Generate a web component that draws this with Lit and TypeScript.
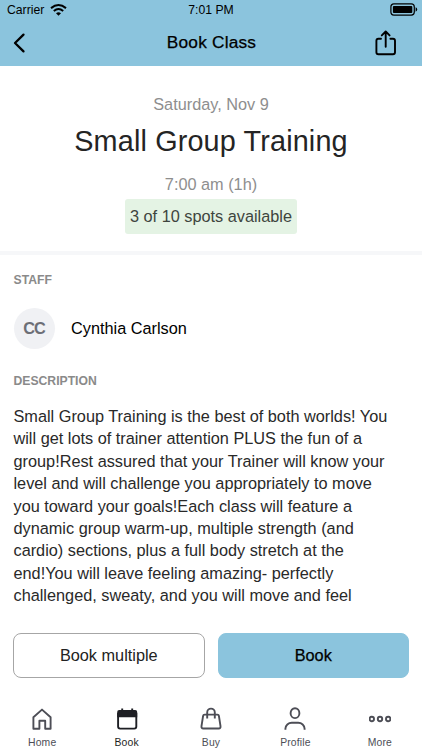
import { LitElement, html, css, svg } from "lit";
import { customElement } from "lit/decorators.js";
import { classMap } from "lit/directives/class-map.js";

const icons = {
  home: svg`<path d="M2.4 10.2 11 2.6l8.6 7.6V21.7h-5.4v-7.9H8.4v7.9H2.4Z"/>`,
  book: svg`<path d="M2.1 6v13.6q0 2 2 2h14.2q2 0 2-2V6"/><path class="solid" d="M1.2 10.2V5Q1.2 3 3.2 3h16q2 0 2 2v5.2Z"/><path d="M6.2 1.4v3M16.2 1.4v3"/>`,
  buy: svg`<path d="M4.6 7.6h12.8q1.3 0 1.5 1.3l1.6 10.2q.3 2.4-1.8 2.4H3.3q-2.1 0-1.8-2.4L3.1 8.9q.2-1.3 1.5-1.3Z"/><path d="M7.2 11.6V5.4a3.8 3.8 0 0 1 7.6 0v6.2"/>`,
  profile: svg`<ellipse cx="11" cy="6.2" rx="4.4" ry="4.9"/><path d="M1.4 22.8v-1c0-3.6 3-6 6.4-6h6.4c3.4 0 6.4 2.4 6.4 6v1"/>`,
  more: svg`<circle cx="2.8" cy="12" r="2.2"/><circle cx="11" cy="12" r="2.2"/><circle cx="19.2" cy="12" r="2.2"/>`,
};

const tabs = [
  { label: "Home", icon: icons.home, active: false },
  { label: "Book", icon: icons.book, active: true },
  { label: "Buy", icon: icons.buy, active: false },
  { label: "Profile", icon: icons.profile, active: false },
  { label: "More", icon: icons.more, active: false },
];

@customElement("app-header")
class AppHeader extends LitElement {
  static styles = css`
    :host { display: flex; flex-direction: column; height: 66px; flex: none; background: #8bc4dd; color: #000; }
    .status { display: grid; grid-template-columns: 1fr auto 1fr; align-items: center; height: 19px; padding: 0 4px 0 7px; font-size: 12.2px; }
    .carrier { display: flex; align-items: center; gap: 6px; }
    .time { padding-right: 3px; }
    .battery { justify-self: end; }
    .nav { display: grid; grid-template-columns: 1fr auto 1fr; align-items: center; height: 47px; padding: 0 24px 0 12px; }
    .title { font-size: 17.3px; font-weight: 400; letter-spacing: .2px; -webkit-text-stroke: 0.25px #000; margin: 0; padding-left: 13px; }
    .share { justify-self: end; }
    svg { display: block; fill: none; stroke: #000; }
  `;
  render() {
    return html`
      <div class="status">
        <div class="carrier">Carrier
          <svg width="17" height="12" viewBox="0 0 17 12" stroke-width="2">
            <path d="M1 4.1Q8.5-2 16 4.1M3.8 6.9q4.7-3.9 9.4 0"/><path d="M6 9.2q2.5-2 5 0L8.5 11.7Z" fill="#000" stroke="none"/>
          </svg>
        </div>
        <div class="time">7:01 PM</div>
        <svg class="battery" width="28" height="13" viewBox="0 0 28 13">
          <rect x=".9" y=".9" width="23.4" height="11.2" rx="3" stroke-width="1.2"/>
          <rect x="2.9" y="2.9" width="19.4" height="7.2" rx="1" fill="#000" stroke="none"/>
          <path d="M25.6 4.3q1.6.6 1.6 2.2t-1.6 2.2Z" fill="#000" stroke="none"/>
        </svg>
      </div>
      <div class="nav">
        <svg width="15" height="22" viewBox="0 0 15 22" stroke-width="2.3" stroke-linecap="round" stroke-linejoin="round"><path d="M11.5 2.6 3 11l8.5 8.4"/></svg>
        <h1 class="title">Book Class</h1>
        <svg class="share" width="24" height="28" viewBox="0 0 24 28" stroke-width="1.9" stroke-linecap="round" stroke-linejoin="round">
          <path d="M7 9.8H4.4Q2.4 9.8 2.4 11.8V23.3q0 2 2 2H19q2 0 2-2V11.8q0-2-2-2H16.4M11.7 17.8V2.6M7.8 6.4l3.9-3.9 3.9 3.9"/>
        </svg>
      </div>`;
  }
}

@customElement("class-details")
class ClassDetails extends LitElement {
  static styles = css`
    :host { display: block; flex: 1; min-height: 0; overflow: hidden; }
    .hero { display: flex; flex-direction: column; align-items: center; height: 189px; box-sizing: border-box; padding-top: 28px; border-bottom: 4px solid #f6f7f9; color: #8e8e8e; font-size: 16.3px; line-height: 20px; }
    .name { margin: 12px 0 17px; font-weight: 400; font-size: 28.8px; line-height: 31px; color: #242424; letter-spacing: .15px; }
    .spots { margin-top: 5px; padding: 0 5px; height: 35px; line-height: 35px; border-radius: 3px; background: #e4f3e4; color: #3e453e; }
    .info { padding: 0 13.5px; }
    .label { margin: 0; font-size: 12.2px; line-height: 14px; font-weight: 700; color: #8a8a8a; }
    .staff { padding-top: 18px; }
    .person { display: flex; align-items: center; gap: 16.5px; margin: 21px 0 25px; color: #000; font-size: 16.3px; }
    .avatar { width: 41px; height: 41px; border-radius: 50%; background: #f0f1f4; color: #6c6e76; display: grid; place-items: center; font-size: 16.3px; font-weight: 700; letter-spacing: -.9px; }
    .text { margin: 17px 0 0; font-size: 16.3px; line-height: 22.4px; color: #292929; white-space: nowrap; }
  `;
  render() {
    return html`
      <section class="hero">
        <div>Saturday, Nov 9</div>
        <h2 class="name">Small Group Training</h2>
        <div>7:00 am (1h)</div>
        <div class="spots">3 of 10 spots available</div>
      </section>
      <section class="info">
        <h3 class="label staff">STAFF</h3>
        <div class="person"><div class="avatar">CC</div><div>Cynthia Carlson</div></div>
        <h3 class="label">DESCRIPTION</h3>
        <p class="text">Small Group Training is the best of both worlds! You<br>will get lots of trainer attention PLUS the fun of a<br>group!Rest assured that your Trainer will know your<br>level and will challenge you appropriately to move<br>you toward your goals!Each class will feature a<br>dynamic group warm-up, multiple strength (and<br>cardio) sections, plus a full body stretch at the<br>end!You will leave feeling amazing- perfectly<br>challenged, sweaty, and you will move and feel</p>
      </section>`;
  }
}

@customElement("app-root")
class AppRoot extends LitElement {
  static styles = css`
    :host { display: flex; flex-direction: column; width: 422px; height: 750px; overflow: hidden; background: #fff; font-family: "Liberation Sans", Arial, sans-serif; }
    .actions { display: grid; grid-template-columns: 1fr 1fr; gap: 13px; padding: 0 13px; height: 45px; flex: none; margin-top: 20px; }
    .button { font: inherit; font-size: 16.3px; color: #222; background: #fff; border: 1px solid #a6a6a6; border-radius: 8px; padding: 0; }
    .primary { background: #8bc4dd; border-color: #8bc4dd; color: #000; -webkit-text-stroke: .25px #000; }
    .tabs { display: grid; grid-template-columns: repeat(5, 1fr); height: 72px; flex: none; }
    .tab { display: flex; flex-direction: column; align-items: center; padding-top: 29px; color: #4d4e56; font-size: 10.4px; line-height: 12px; gap: 6px; letter-spacing: .15px; }
    .active { color: #1e1f24; }
    .icon { display: block; width: 22px; height: 24px; fill: none; stroke: currentColor; stroke-width: 1.9; stroke-linejoin: round; }
    .icon .solid { fill: currentColor; stroke: none; }
  `;
  render() {
    return html`
      <app-header></app-header>
      <class-details></class-details>
      <div class="actions">
        <button class="button">Book multiple</button>
        <button class="button primary">Book</button>
      </div>
      <nav class="tabs">
        ${tabs.map((t) => html`<div class=${classMap({ tab: true, active: t.active })}><svg class="icon" viewBox="0 0 22 24">${t.icon}</svg><span>${t.label}</span></div>`)}
      </nav>`;
  }
}
